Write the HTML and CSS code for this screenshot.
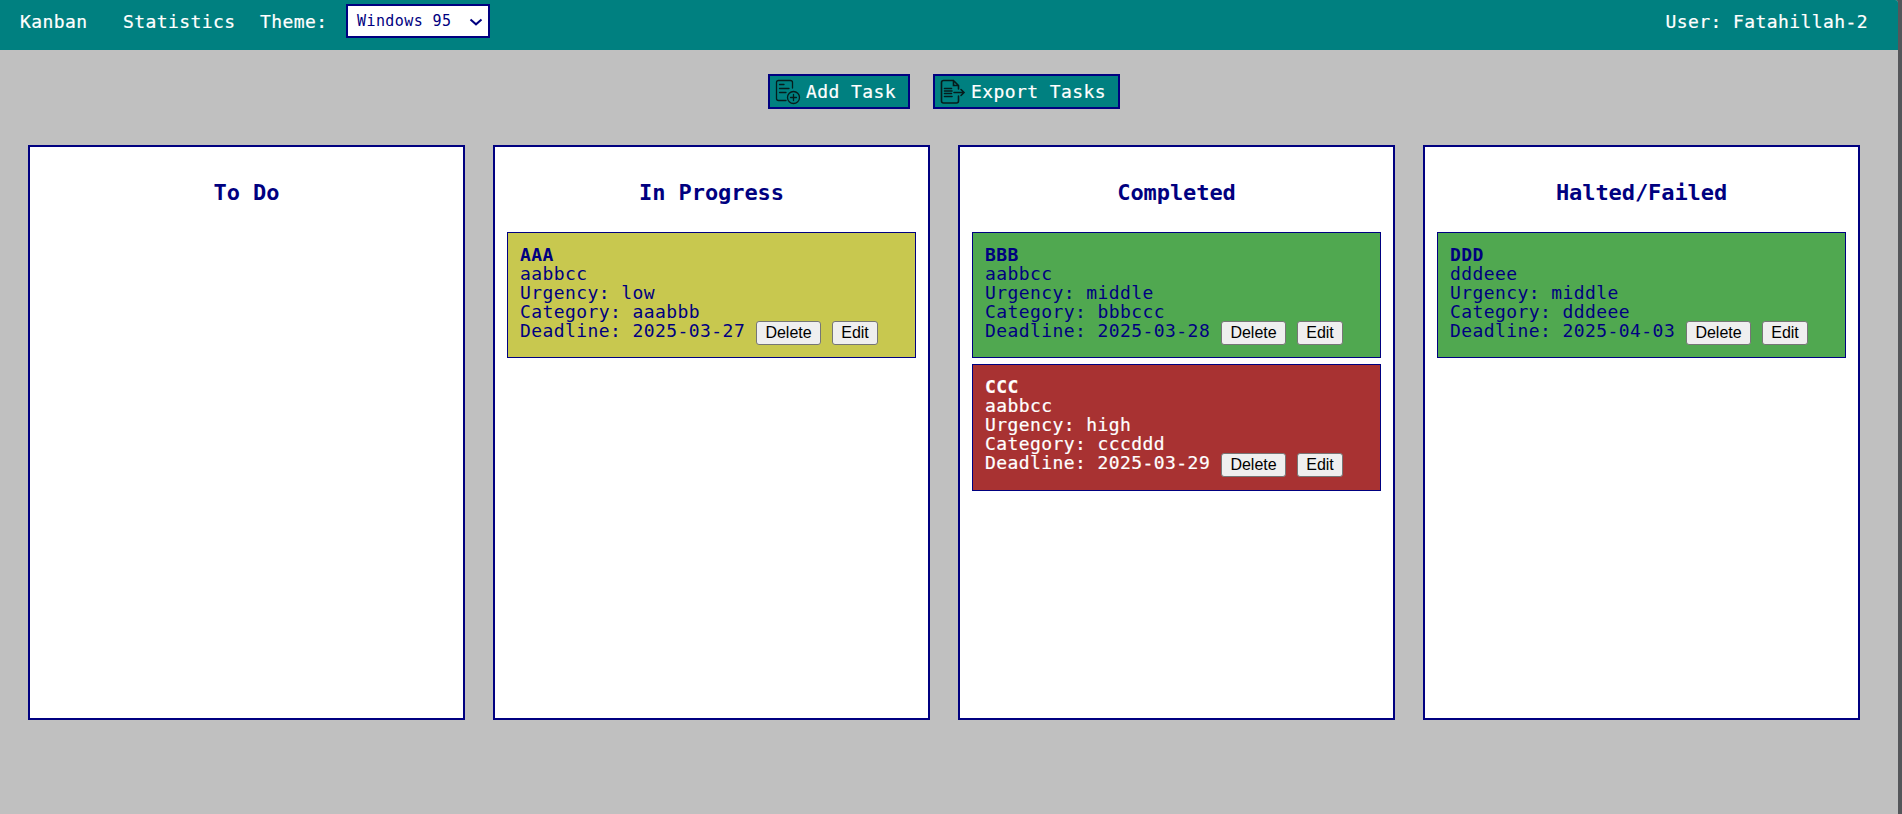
FILE: index.html
```html
<!DOCTYPE html>
<html lang="en">
<head>
<meta charset="utf-8">
<title>Kanban</title>
<link rel="stylesheet" href="styles.css">
</head>
<body>
<div class="app">
  <nav class="navbar">
    <a class="nav-link kanban">Kanban</a>
    <a class="nav-link stats">Statistics</a>
    <span class="nav-link theme">Theme:</span>
    <div class="select"><span>Windows 95</span>
      <svg width="14" height="10" viewBox="0 0 14 10"><path d="M1.500 2.500 7 7.300 12.500 2.500" fill="none" stroke="#000080" stroke-width="2"/></svg>
    </div>
    <span class="user">User: Fatahillah-2</span>
  </nav>
  <div class="actions">
    <div class="action add">
      <svg width="26" height="26" viewBox="0 0 26 26" fill="none" stroke="#061c1c" stroke-width="1.3" stroke-linecap="round"><path d="M17.500 9V3.500Q17.500 1.500 15.500 1.500H3.500Q1.500 1.500 1.500 3.500V19.500Q1.500 21.500 3.500 21.500H11M4.500 5.500H9M4.500 9.500H14M4.500 13.500H11"/><circle cx="18.500" cy="18.500" r="6"/><path d="M18.500 15.500V21.500M15.500 18.500H21.500"/></svg>
      <span>Add Task</span>
    </div>
    <div class="action export">
      <svg width="26" height="26" viewBox="0 0 26 26" fill="none" stroke="#061c1c" stroke-width="1.6" stroke-linecap="round"><path d="M18.500 10V6.500L13.500 1.500H3.500Q1.500 1.500 1.500 3.500V22Q1.500 24 3.500 24H16.500Q18.500 24 18.500 22V17M13.500 1.500V6.500H18.500M4.500 9.500H11.500M4.500 12H12M4.500 14.500H11.500M4.500 17.500H12M14 13.500H24M21 10.500 24 13.500 21 16.500"/></svg>
      <span>Export Tasks</span>
    </div>
  </div>
  <main class="board">
    <section class="column"><h2>To Do</h2></section>
    <section class="column"><h2>In Progress</h2>
      <article class="card low">
        <b>AAA</b><div>aabbcc</div><div>Urgency: low</div><div>Category: aaabbb</div>
        <div class="last"><span>Deadline: 2025-03-27</span><button class="del">Delete</button><button class="edit">Edit</button></div>
      </article>
    </section>
    <section class="column"><h2>Completed</h2>
      <article class="card middle">
        <b>BBB</b><div>aabbcc</div><div>Urgency: middle</div><div>Category: bbbccc</div>
        <div class="last"><span>Deadline: 2025-03-28</span><button class="del">Delete</button><button class="edit">Edit</button></div>
      </article>
      <article class="card high">
        <b>CCC</b><div>aabbcc</div><div>Urgency: high</div><div>Category: cccddd</div>
        <div class="last"><span>Deadline: 2025-03-29</span><button class="del">Delete</button><button class="edit">Edit</button></div>
      </article>
    </section>
    <section class="column"><h2>Halted/Failed</h2>
      <article class="card middle">
        <b>DDD</b><div>dddeee</div><div>Urgency: middle</div><div>Category: dddeee</div>
        <div class="last"><span>Deadline: 2025-04-03</span><button class="del">Delete</button><button class="edit">Edit</button></div>
      </article>
    </section>
  </main>
</div>
</body>
</html>
```
FILE: styles.css
```css
* { box-sizing: border-box; }
body {
  margin: 0;
  background: #54565a;
  color: #000080;
  font: 18px/19px "DejaVu Sans Mono", monospace;
  letter-spacing: 0.42px;
  white-space: nowrap;
}
.app {
  width: 1898px;
  height: 814px;
  background: #c0c0c0;
  border-top-right-radius: 3px;
  overflow: hidden;
}
.navbar {
  display: flex;
  align-items: flex-start;
  height: 50px;
  padding: 4px 30px 0 20px;
  background: #008080;
  color: #fff;
}
.nav-link, .user, .action, .high { -webkit-text-stroke: 0.2px currentColor; }
.nav-link, .user { padding-top: 8px; }
.kanban { width: 103px; }
.stats { width: 137px; }
.theme { width: 86px; }
.select {
  display: flex;
  justify-content: space-between;
  width: 144px;
  height: 34px;
  padding: 6px 5px 0 9px;
  border: 2px solid #000080;
  background: #fff;
  color: #000080;
  font-size: 15px;
}
.select svg { margin-top: 5px; }
.user { margin-left: auto; }
.actions {
  display: flex;
  gap: 23px;
  padding: 24px 0 0 768px;
}
.action {
  display: flex;
  height: 35px;
  border: 2px solid #000080;
  background: #008080;
  color: #fff;
}
.action svg { margin: 3px 5px 0 5px; }
.action span { padding-top: 6px; }
.add { width: 142px; }
.export { width: 187px; }
.board {
  display: flex;
  gap: 28px;
  padding: 36px 38px 0 28px;
}
.column {
  flex: 0 0 437px;
  height: 575px;
  padding: 0 12px;
  border: 2px solid #000080;
  background: #fff;
}
h2 {
  margin: 33px 0 26px;
  font-size: 22px;
  line-height: 26px;
  letter-spacing: -0.08px;
  text-align: center;
}
.card {
  height: 126px;
  margin-bottom: 6px;
  padding: 12px;
  border: 1px solid #000080;
}
.card b { display: block; }
.low { background: #c8c84f; }
.middle { background: #50a850; }
.high { height: 127px; background: #a83232; color: #fff; }
.last { display: flex; height: 24px; }
.last span { width: 236px; }
button {
  height: 24px;
  padding: 0;
  border: 1px solid #767676;
  border-radius: 3px;
  background: #efefef;
  color: #000;
  font: 16px/20px "Liberation Sans", Arial, sans-serif;
  -webkit-text-stroke: 0;
}
.del { width: 65px; }
.edit { width: 46px; margin-left: 11px; }
```
